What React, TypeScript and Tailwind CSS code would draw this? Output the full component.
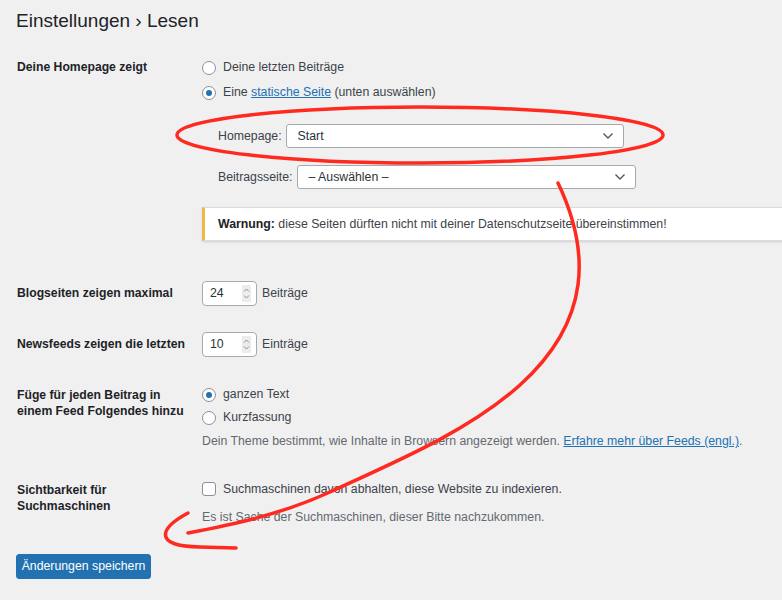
import React from "react";

const font = { fontFamily: "'Liberation Sans', Arial, sans-serif" };

function Radio({ checked }: { checked?: boolean }) {
  return (
    <span className="w-[14px] h-[14px] rounded-full border border-[#8c8f94] bg-white flex items-center justify-center shrink-0">
      {checked && <span className="w-[6px] h-[6px] rounded-full bg-[#2271b1]" />}
    </span>
  );
}

function Chevron() {
  return (
    <svg width="12" height="8" viewBox="0 0 12 8" className="shrink-0">
      <path d="M1.5 1.5 L6 6 L10.5 1.5" fill="none" stroke="#50575e" strokeWidth="1.4" />
    </svg>
  );
}

function Select({ value, width }: { value: string; width: string }) {
  return (
    <div className={`${width} h-[24px] bg-white border border-[#a7aaad] rounded-[3px] flex items-center justify-between pl-[11px] pr-[9px] text-[12.3px] text-[#2c3338]`}>
      <span>{value}</span>
      <Chevron />
    </div>
  );
}

function NumberInput({ value }: { value: string }) {
  return (
    <div className="w-[55px] h-[25px] bg-white border border-[#a7aaad] rounded-[4px] flex items-center justify-between pl-[7px] pr-[5px] text-[12.3px] text-[#2c3338]">
      <span>{value}</span>
      <span className="w-[9px] h-[17px] bg-[#ececec] flex items-center justify-center">
        <svg width="7" height="13" viewBox="0 0 7 13">
          <path d="M1 4.5 L3.5 2 L6 4.5" fill="none" stroke="#8c8f94" strokeWidth="1" />
          <path d="M1 8.5 L3.5 11 L6 8.5" fill="none" stroke="#8c8f94" strokeWidth="1" />
        </svg>
      </span>
    </div>
  );
}

const label = "w-[186px] shrink-0 pl-[1px] text-[12.2px] font-bold text-[#1d2327]";

export default function App() {
  return (
    <div className="relative w-[782px] h-[600px] overflow-hidden bg-[#f0f0f1] text-[#3c434a] text-[12.3px]" style={font}>
      <div className="pl-[16px]">
        <div className="h-[42px] flex items-center text-[19px] text-[#1d2327] font-normal">
          Einstellungen › Lesen
        </div>

        {/* Homepage zeigt */}
        <div className="flex mt-[13px]">
          <div className={`${label} h-[25px] flex items-center`}>Deine Homepage zeigt</div>
          <div className="flex-1">
            <div className="h-[25px] flex items-center gap-[7px]">
              <Radio />
              <span>Deine letzten Beiträge</span>
            </div>
            <div className="h-[25px] flex items-center gap-[7px]">
              <Radio checked />
              <span>
                Eine <span className="text-[#2271b1] underline">statische Seite</span> (unten auswählen)
              </span>
            </div>
            <div className="pl-[16px] mt-[19px] flex items-center gap-[4px]">
              <span>Homepage:</span>
              <Select value="Start" width="w-[338px]" />
            </div>
            <div className="pl-[16px] mt-[17px] flex items-center gap-[4px]">
              <span>Beitragsseite:</span>
              <Select value="– Auswählen –" width="w-[339px]" />
            </div>
            <div className="mt-[18px] w-[620px] h-[34px] bg-white border border-[#dcdcde] border-l-[3px] border-l-[#f0b849] shadow-sm flex items-center pl-[13px] text-[#3c434a]">
              <span>
                <span className="font-bold text-[#1d2327]">Warnung:</span> diese Seiten dürften nicht mit deiner Datenschutzseite übereinstimmen!
              </span>
            </div>
          </div>
        </div>

        {/* Blogseiten */}
        <div className="flex mt-[40px]">
          <div className={`${label} h-[25px] flex items-center`}>Blogseiten zeigen maximal</div>
          <div className="flex items-center gap-[5px]">
            <NumberInput value="24" />
            <span>Beiträge</span>
          </div>
        </div>

        {/* Newsfeeds */}
        <div className="flex mt-[26px]">
          <div className={`${label} h-[25px] flex items-center`}>Newsfeeds zeigen die letzten</div>
          <div className="flex items-center gap-[5px]">
            <NumberInput value="10" />
            <span>Einträge</span>
          </div>
        </div>

        {/* Feed */}
        <div className="flex mt-[26px]">
          <div className={`${label} pt-[4px] leading-[16px]`}>
            Füge für jeden Beitrag in
            <br />
            einem Feed Folgendes hinzu
          </div>
          <div>
            <div className="h-[23px] flex items-center gap-[7px]">
              <Radio checked />
              <span>ganzen Text</span>
            </div>
            <div className="h-[23px] flex items-center gap-[7px]">
              <Radio />
              <span>Kurzfassung</span>
            </div>
            <div className="mt-[4px] h-[16px] leading-[16px] whitespace-nowrap text-[#646970]">
              Dein Theme bestimmt, wie Inhalte in Browsern angezeigt werden.{" "}
              <span className="text-[#2271b1] underline">Erfahre mehr über Feeds (engl.)</span>.
            </div>
          </div>
        </div>

        {/* Sichtbarkeit */}
        <div className="flex mt-[31px]">
          <div className={`${label} pt-[2px] leading-[16px]`}>
            Sichtbarkeit für
            <br />
            Suchmaschinen
          </div>
          <div>
            <div className="h-[18px] flex items-center gap-[7px]">
              <span className="w-[14px] h-[14px] rounded-[3px] border border-[#8c8f94] bg-white shrink-0" />
              <span>Suchmaschinen davon abhalten, diese Website zu indexieren.</span>
            </div>
            <div className="mt-[11px] h-[16px] leading-[16px] text-[#646970]">
              Es ist Sache der Suchmaschinen, dieser Bitte nachzukommen.
            </div>
          </div>
        </div>

        <div className="mt-[29px]">
          <button className="w-[135px] h-[25px] bg-[#2271b1] border border-[#2271b1] rounded-[3px] text-white text-[12.3px] whitespace-nowrap flex items-center justify-center">
            Änderungen speichern
          </button>
        </div>
      </div>

      <svg className="absolute inset-0 pointer-events-none" width="782" height="600" viewBox="0 0 782 600">
        <ellipse cx="420" cy="135" rx="243" ry="28" fill="none" stroke="#ff2a1f" strokeWidth="3.5" />
        <path
          d="M558 183 C590 250 592 320 520 385 C470 430 400 460 330 492 C280 515 230 525 188 533"
          fill="none"
          stroke="#ff2a1f"
          strokeWidth="3.5"
          strokeLinecap="round"
        />
        <path
          d="M188 513 C160 528 152 546 200 547 L236 548"
          fill="none"
          stroke="#ff2a1f"
          strokeWidth="3.5"
          strokeLinecap="round"
        />
      </svg>
    </div>
  );
}
